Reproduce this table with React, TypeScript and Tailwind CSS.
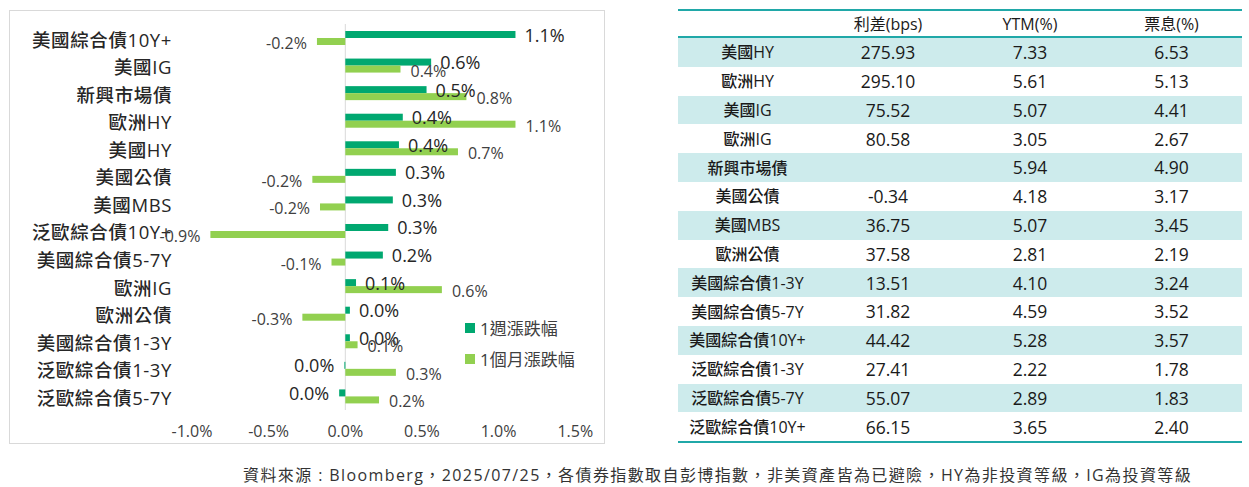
import React from "react";

const FONT = "'Open Sans','Noto Sans CJK TC',sans-serif";

// 1-week (dark) and 1-month (light) changes, %
const chartRows = [
  { name: "美國綜合債10Y+", w: 1.11, wl: "1.1%", m: -0.185, ml: "-0.2%" },
  { name: "美國IG", w: 0.56, wl: "0.6%", m: 0.36, ml: "0.4%" },
  { name: "新興市場債", w: 0.53, wl: "0.5%", m: 0.79, ml: "0.8%" },
  { name: "歐洲HY", w: 0.375, wl: "0.4%", m: 1.11, ml: "1.1%" },
  { name: "美國HY", w: 0.35, wl: "0.4%", m: 0.735, ml: "0.7%" },
  { name: "美國公債", w: 0.33, wl: "0.3%", m: -0.215, ml: "-0.2%" },
  { name: "美國MBS", w: 0.31, wl: "0.3%", m: -0.165, ml: "-0.2%" },
  { name: "泛歐綜合債10Y+", w: 0.28, wl: "0.3%", m: -0.88, ml: "-0.9%" },
  { name: "美國綜合債5-7Y", w: 0.245, wl: "0.2%", m: -0.09, ml: "-0.1%" },
  { name: "歐洲IG", w: 0.07, wl: "0.1%", m: 0.63, ml: "0.6%" },
  { name: "歐洲公債", w: 0.03, wl: "0.0%", m: -0.28, ml: "-0.3%" },
  { name: "美國綜合債1-3Y", w: 0.03, wl: "0.0%", m: 0.08, ml: "0.1%" },
  { name: "泛歐綜合債1-3Y", w: -0.006, wl: "0.0%", m: 0.33, ml: "0.3%" },
  { name: "泛歐綜合債5-7Y", w: -0.04, wl: "0.0%", m: 0.22, ml: "0.2%" },
];

const tableRows = [
  ["美國HY", "275.93", "7.33", "6.53"],
  ["歐洲HY", "295.10", "5.61", "5.13"],
  ["美國IG", "75.52", "5.07", "4.41"],
  ["歐洲IG", "80.58", "3.05", "2.67"],
  ["新興市場債", "", "5.94", "4.90"],
  ["美國公債", "-0.34", "4.18", "3.17"],
  ["美國MBS", "36.75", "5.07", "3.45"],
  ["歐洲公債", "37.58", "2.81", "2.19"],
  ["美國綜合債1-3Y", "13.51", "4.10", "3.24"],
  ["美國綜合債5-7Y", "31.82", "4.59", "3.52"],
  ["美國綜合債10Y+", "44.42", "5.28", "3.57"],
  ["泛歐綜合債1-3Y", "27.41", "2.22", "1.78"],
  ["泛歐綜合債5-7Y", "55.07", "2.89", "1.83"],
  ["泛歐綜合債10Y+", "66.15", "3.65", "2.40"],
];

const ZERO = 345.3;
const SCALE = 153.3; // px per 1%
const TOP = 24;
const STEP = 27.57;

function BarChart() {
  const x = (v: number) => ZERO + v * SCALE;
  return (
    <svg width={594} height={432} viewBox="10 11 594 432" style={{ fontFamily: FONT }}>
      <line x1={ZERO} y1={TOP} x2={ZERO} y2={410} stroke="#d9d9d9" strokeWidth={1} />
      {chartRows.map((r, i) => {
        const top = TOP + i * STEP;
        const wEnd = x(r.w);
        const mEnd = x(r.m);
        return (
          <g key={r.name}>
            <text
              x={172}
              y={top + 15}
              textAnchor="end"
              dominantBaseline="central"
              fontSize={18.5}
              letterSpacing={0.6}
              fontWeight={500}
              fill="#262626"
            >
              {r.name}
            </text>
            <rect x={Math.min(ZERO, wEnd)} y={top + 7} width={Math.max(Math.abs(wEnd - ZERO), 1)} height={7} fill="#00a870" />
            <rect x={Math.min(ZERO, mEnd)} y={top + 14} width={Math.abs(mEnd - ZERO)} height={7} fill="#92d050" />
            <text
              x={r.w >= 0 ? wEnd + 9 : Math.min(wEnd, ZERO - 1) - 10}
              y={top + 10.5}
              textAnchor={r.w >= 0 ? "start" : "end"}
              dominantBaseline="central"
              fontSize={18}
              fontWeight={500}
              fill="#262626"
            >
              {r.wl}
            </text>
            <text
              x={r.m >= 0 ? mEnd + 10 : mEnd - 10}
              y={top + 19}
              textAnchor={r.m >= 0 ? "start" : "end"}
              dominantBaseline="central"
              fontSize={16}
              fill="#404040"
            >
              {r.ml}
            </text>
          </g>
        );
      })}
      {[-1, -0.5, 0, 0.5, 1, 1.5].map((v) => (
        <text key={v} x={x(v)} y={431} textAnchor="middle" dominantBaseline="central" fontSize={16} fill="#404040">
          {v.toFixed(1)}%
        </text>
      ))}
      <rect x={465} y={323} width={10} height={10} fill="#00a870" />
      <text x={480} y={328} dominantBaseline="central" fontSize={17} fill="#404040">1週漲跌幅</text>
      <rect x={465} y={354} width={10} height={10} fill="#92d050" />
      <text x={480} y={359} dominantBaseline="central" fontSize={17} fill="#404040">1個月漲跌幅</text>
    </svg>
  );
}

function SpreadTable() {
  return (
    <div className="w-[564px] border-t-2 border-b-2 border-[#20a8a8] text-[#1a1a1a]" style={{ fontFamily: FONT }}>
      <div className="grid grid-cols-[139px_142px_142px_141px] h-[27px] items-center border-b-2 border-[#20a8a8] text-[16px]">
        <div />
        <div className="text-center">利差(bps)</div>
        <div className="text-center">YTM(%)</div>
        <div className="text-center">票息(%)</div>
      </div>
      {tableRows.map((row, i) => (
        <div
          key={row[0]}
          className={`grid grid-cols-[139px_142px_142px_141px] h-[28.8px] items-center ${
            i % 2 === 0 ? "bg-[#cdebec]" : "bg-white"
          }`}
        >
          <div className="text-center text-[16px] font-medium">{row[0]}</div>
          <div className="text-center text-[17.5px] font-medium">{row[1]}</div>
          <div className="text-center text-[17.5px] font-medium">{row[2]}</div>
          <div className="text-center text-[17.5px] font-medium">{row[3]}</div>
        </div>
      ))}
    </div>
  );
}

export default function App() {
  return (
    <div className="w-[1249px] h-[487px] bg-white overflow-hidden">
      <div className="flex items-start pt-[9px] pl-[9px]">
        <div className="mt-[1px] w-[596px] h-[434px] border border-[#d9d9d9]">
          <BarChart />
        </div>
        <div className="ml-[73px]">
          <SpreadTable />
        </div>
      </div>
      <p
        className="mt-[21px] pl-[243px] text-[16px] leading-[20px] tracking-[1.4px] text-[#333333] whitespace-nowrap"
        style={{ fontFamily: FONT }}
      >
        資料來源 : Bloomberg，2025/07/25，各債券指數取自彭博指數，非美資產皆為已避險，HY為非投資等級，IG為投資等級
      </p>
    </div>
  );
}
